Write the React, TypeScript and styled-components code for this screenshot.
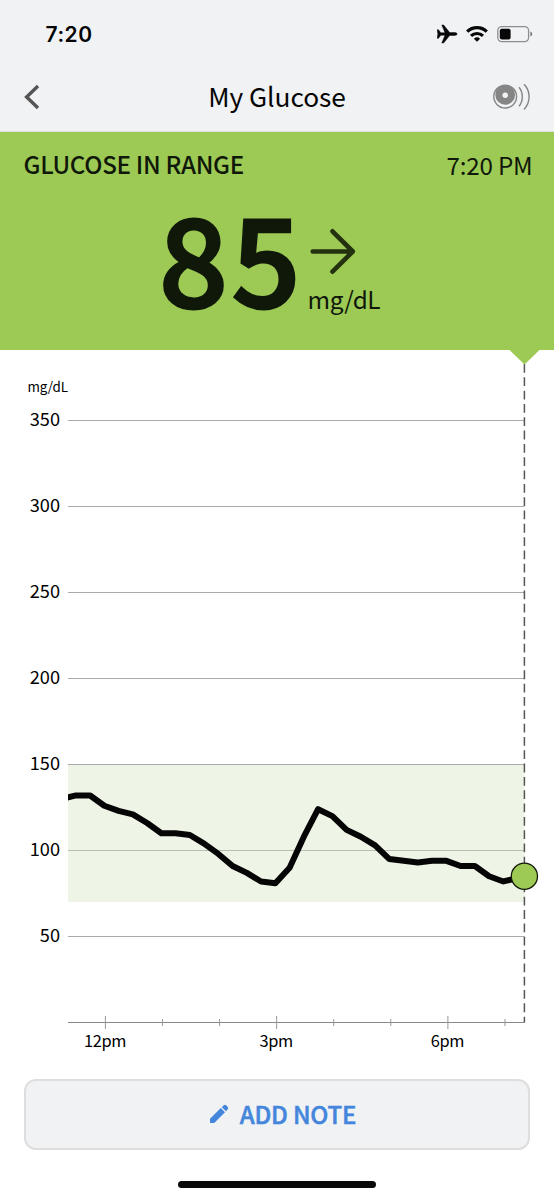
import React from "react";
import styled, { createGlobalStyle } from "styled-components";

const sans = `"Noto Sans CJK SC", "Noto Sans", sans-serif`;

const Global = createGlobalStyle`
  html, body { margin: 0; background: #fff; }
  body { font-family: ${sans}; color: #050505; }
  * { box-sizing: border-box; }
`;

const Screen = styled.main`
  width: 554px;
  height: 1200px;
  display: flex;
  flex-direction: column;
  overflow: hidden;
  background: #fff;
`;

const Top = styled.header`
  height: 132px;
  flex: none;
  background: #f1f2f4;
  border-bottom: 1px solid #dadfd8;
`;

const StatusBar = styled.div`
  height: 68px;
  display: flex;
  align-items: center;
  justify-content: space-between;
  padding: 0 21px 0 45.5px;
`;

const Clock = styled.span`
  font: 600 21px/30px Inter, sans-serif;
  letter-spacing: 0.5px;
  padding-top: 1px;
`;

const StatusIcons = styled.div`
  display: flex;
  align-items: center;
`;

const NavBar = styled.div`
  height: 58px;
  display: grid;
  grid-template-columns: 60px 1fr 60px;
  align-items: center;
`;

const Title = styled.h1`
  margin: -3px 0 0;
  text-align: center;
  font-size: 26.3px;
  line-height: 40px;
  font-weight: 400;
  letter-spacing: -0.05px;
`;

const IconButton = styled.button<{ $end?: boolean }>`
  display: flex;
  justify-content: ${(p) => (p.$end ? "flex-end" : "flex-start")};
  padding: ${(p) => (p.$end ? "0 23px 0 0" : "0 0 0 23px")};
  border: 0;
  background: none;
`;

const Reading = styled.section`
  height: 217.5px;
  flex: none;
  background: #9dca55;
  color: #10180a;
`;

const ReadingHead = styled.div`
  display: flex;
  justify-content: space-between;
  padding: 12px 21.5px 0 23.5px;
  height: 62px;
`;

const RangeLabel = styled.span`
  font-size: 24.2px;
  line-height: 40px;
  font-weight: 500;
  letter-spacing: -0.33px;
`;

const Time = styled.span`
  font-size: 24.2px;
  line-height: 41px;
  letter-spacing: -0.2px;
`;

const ReadingBody = styled.div`
  display: flex;
  padding-left: 159px;
`;

const Value = styled.span`
  font-size: 121px;
  line-height: 122px;
  font-weight: 500;
  height: 120px;
  width: 148.5px;
  letter-spacing: 3.6px;
  -webkit-text-stroke: 2.8px currentColor;
`;

const Trend = styled.div`
  display: flex;
  flex-direction: column;
  padding-top: 33px;
`;

const Unit = styled.span`
  font-size: 24.4px;
  line-height: 36px;
  margin-top: 4px;
  letter-spacing: -0.4px;
`;

const Chart = styled.svg`
  display: block;
  flex: none;
  margin-top: -0.5px;
  overflow: visible;
  font-family: ${sans};
`;

const Footer = styled.footer`
  padding: 14px 24px 0;
  display: flex;
  flex-direction: column;
  align-items: center;
`;

const NoteButton = styled.button`
  width: 506px;
  height: 71px;
  display: flex;
  align-items: center;
  justify-content: center;
  gap: 11px;
  padding: 0 0 2px 11px;
  border: 2px solid #dedede;
  border-radius: 12px;
  background: #f1f2f4;
  color: #4486dc;
  font-family: ${sans};
  font-size: 24px;
  line-height: 40px;
  font-weight: 500;
  letter-spacing: -0.2px;
  -webkit-text-stroke: 0.5px currentColor;
`;

const HomeIndicator = styled.div`
  width: 198px;
  height: 7px;
  margin-top: 31px;
  border-radius: 4px;
  background: #0a0a0a;
`;

const readings = [
  132, 126, 123, 121, 116, 110, 110, 109, 104, 98, 91, 87, 82, 81, 90, 108, 124,
  120, 112, 108, 103, 95, 94, 93, 94, 94, 91, 91, 85, 82,
];
const TOP = 349;
const LEFT = 68;
const NOW = 524.4;
const yOf = (v: number) => 1022.5 - 1.72 * v - TOP;
const points = [
  [LEFT - 4, yOf(130.3)],
  [76, yOf(132)],
  ...readings.map((v, i) => [90.1 + i * 14.25, yOf(v)]),
  [NOW, yOf(85)],
]
  .map((p) => p.join(","))
  .join(" ");
const hours = ["12pm", "", "", "3pm", "", "", "6pm", ""];

function GlucoseChart() {
  return (
    <Chart width="554" height="716" viewBox="0 0 554 716">
      <clipPath id="plot">
        <rect x={LEFT} y="0" width="486" height="716" />
      </clipPath>
      <rect x={LEFT} y={yOf(150)} width={NOW - LEFT} height={80 * 1.72} fill="#eef4e6" />
      <text x="27.5" y="43" fontSize="13.4" letterSpacing="-0.15">mg/dL</text>
      {[350, 300, 250, 200, 150, 100, 50].map((v) => (
        <g key={v}>
          <line x1={LEFT} x2={NOW} y1={yOf(v)} y2={yOf(v)} stroke={v === 100 ? "#b9beb4" : "#aaa"} />
          <text x="60" y={yOf(v) + 5} fontSize="18.2" textAnchor="end">{v}</text>
        </g>
      ))}
      <line x1={LEFT} x2={NOW} y1={yOf(0)} y2={yOf(0)} stroke="#888" />
      {hours.map((h, i) => {
        const x = 105.4 + i * 57.08;
        const r = h ? 6.5 : 3.5;
        return (
          <g key={i}>
            <line x1={x} x2={x} y1={yOf(0) - r} y2={yOf(0) + r} stroke="#999" />
            {h && <text x={x - 0.4} y="697.5" fontSize="16.4" letterSpacing="-0.35" textAnchor="middle">{h}</text>}
          </g>
        );
      })}
      <line x1={NOW} x2={NOW} y1="15" y2={yOf(0)} stroke="#555" strokeWidth="1.5" strokeDasharray="8.8 4.52" />
      <path d="M509 0.5H540L524.5 15.5Z" fill="#9dca55" />
      <polyline points={points} clipPath="url(#plot)" fill="none" stroke="#050505" strokeWidth="6" strokeLinejoin="round" />
      <circle cx={NOW} cy={yOf(85)} r="13.1" fill="#9dca55" stroke="#111a08" strokeWidth="1.3" />
    </Chart>
  );
}

export default function App() {
  return (
    <Screen>
      <Global />
      <Top>
        <StatusBar>
          <Clock>7:20</Clock>
          <StatusIcons>
            <svg width="96" height="20" viewBox="0 0 96 20" fill="#080808">
              <path d="M0.1 5.8h1.4l2.3 3h4.2L4.8 1h1.8l6.1 7.6h4.8c1.3 0 2.7.6 2.7 1.4s-1.4 1.4-2.7 1.4h-4.8L6.6 19H4.8L8 11.2H3.8l-2.3 3H.1L.9 10z" stroke="#080808" strokeWidth="0.5" />
              <g fill="none" stroke="#080808" strokeWidth="3.2">
                <path d="M30.2 7.6a14 14 0 0 1 19.6 0" />
                <path d="M34 11.9a8.7 8.7 0 0 1 12 0" />
              </g>
              <path d="M40 17.8l-3.1-3.1a4.5 4.5 0 0 1 6.2 0z" />
              <rect x="60.8" y="2.6" width="30.8" height="15" rx="4" fill="none" stroke="#8d8e90" strokeWidth="1.3" />
              <rect x="62.8" y="4.7" width="10.8" height="10.8" rx="2" />
              <path d="M93.4 7.6c2.4 1 2.4 4 0 5z" fill="#777" />
            </svg>
          </StatusIcons>
        </StatusBar>
        <NavBar>
          <IconButton aria-label="Back">
            <svg width="18" height="28" viewBox="0 0 18 28" fill="none" stroke="#555" strokeWidth="3.4">
              <path d="M15 3L3.6 14L15 25" />
            </svg>
          </IconButton>
          <Title>My Glucose</Title>
          <IconButton $end aria-label="Scan sensor">
            <svg width="38" height="28" viewBox="0 0 38 28" fill="none" stroke="#858585" strokeWidth="1.4" overflow="visible">
              <circle cx="12.2" cy="13.6" r="11.4" />
              <circle cx="12.2" cy="11.8" r="9.9" fill="#858585" stroke="none" />
              <circle cx="12.2" cy="12.2" r="2.7" fill="#f1f2f4" stroke="none" />
              <path d="M26 4.2c4.4 5.3 4.4 13.7 0 19M31 1.2c6.8 6.8 6.8 18.4 0 25.2" />
            </svg>
          </IconButton>
        </NavBar>
      </Top>
      <Reading>
        <ReadingHead>
          <RangeLabel>GLUCOSE IN RANGE</RangeLabel>
          <Time>7:20 PM</Time>
        </ReadingHead>
        <ReadingBody>
          <Value>85</Value>
          <Trend>
            <svg width="50" height="50" viewBox="0 0 50 50" fill="none" stroke="#23310f" strokeWidth="4.6" strokeLinecap="round" strokeLinejoin="round">
              <path d="M4.7 24.5H44M24.5 4.3L44.8 24.5L24.5 44.7" />
            </svg>
            <Unit>mg/dL</Unit>
          </Trend>
        </ReadingBody>
      </Reading>
      <GlucoseChart />
      <Footer>
        <NoteButton>
          <svg width="20" height="20" viewBox="0 0 20 20" fill="currentColor">
            <path d="M1 14.8L11.8 4.1L16 8.3L5.2 19H1zM12.8 3.2L14.8 1.3Q16 .3 17.2 1.3L18.6 2.7Q19.7 3.9 18.8 5.2L17 7.3z" />
          </svg>
          ADD NOTE
        </NoteButton>
        <HomeIndicator />
      </Footer>
    </Screen>
  );
}
